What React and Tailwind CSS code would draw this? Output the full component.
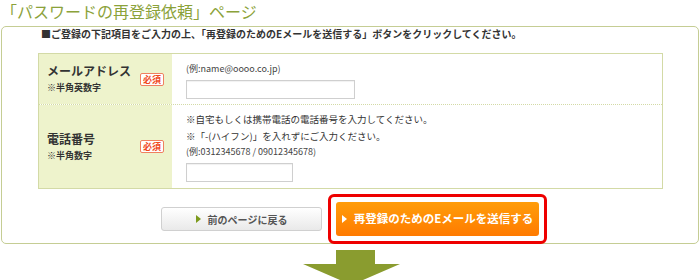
import React from "react";

const jp = { fontFamily: '"Noto Sans CJK JP", "Noto Sans", sans-serif' };

function Badge() {
  return (
    <span className="inline-flex items-center justify-center w-[24px] h-[13px] border border-[#f08060] rounded-[2px] bg-white text-[9px] leading-none font-bold text-[#f04a1e]">
      必須
    </span>
  );
}

function Label({ title, note }) {
  return (
    <div className="w-[133px] shrink-0 bg-[#eef3cc] flex items-center justify-between pl-[8px] pr-[8px]">
      <div>
        <div className="text-[12px] leading-[18px] font-bold text-[#333]">{title}</div>
        <div className="text-[9px] leading-[16px] font-bold text-[#333]">{note}</div>
      </div>
      <Badge />
    </div>
  );
}

export default function App() {
  return (
    <div className="w-[700px] h-[280px] bg-white overflow-hidden" style={jp}>
      {/* Title */}
      <div className="pt-[1px] pl-[1px]">
        <h1 className="text-[16px] leading-[20px] text-[#8ba23a] whitespace-nowrap">
          「パスワードの再登録依頼」ページ
        </h1>
      </div>

      {/* Main box */}
      <div className="mt-[5px] ml-[1px] w-[698px] h-[218px] border border-[#c5cd94] rounded-[5px]">
        <p className="pt-[1px] pl-[39px] text-[10px] leading-[12px] font-bold text-[#333] whitespace-nowrap">
          ■ご登録の下記項目をご入力の上、「再登録のためのEメールを送信する」ボタンをクリックしてください。
        </p>

        {/* Form table */}
        <div className="mt-[13px] ml-[36px] w-[625px] border border-[#d3daa6]">
          <div className="flex h-[51px] border-b border-dotted border-[#d3daa6]">
            <Label title="メールアドレス" note="※半角英数字" />
            <div className="flex-1 pl-[14px] pt-[8px]">
              <div className="text-[9px] leading-[14px] text-[#444]">(例:name@oooo.co.jp)</div>
              <div className="mt-[4px] w-[169px] h-[19px] border border-[#cfcfcf] bg-white shadow-[inset_0_1px_1px_rgba(0,0,0,0.06)]" />
            </div>
          </div>
          <div className="flex h-[83px]">
            <Label title="電話番号" note="※半角数字" />
            <div className="flex-1 pl-[14px] pt-[6px]">
              <div className="text-[9.5px] leading-[16.5px] text-[#333]">
                ※自宅もしくは携帯電話の電話番号を入力してください。
              </div>
              <div className="text-[9.5px] leading-[16.5px] text-[#333]">
                ※「-(ハイフン)」を入れずにご入力ください。
              </div>
              <div className="text-[9px] leading-[16.5px] text-[#444]">
                (例:0312345678 / 09012345678)
              </div>
              <div className="mt-[2px] w-[107px] h-[19px] border border-[#cfcfcf] bg-white shadow-[inset_0_1px_1px_rgba(0,0,0,0.06)]" />
            </div>
          </div>
        </div>

        {/* Buttons */}
        <div className="mt-[5px] ml-[159px] flex items-center gap-[6px]">
          <button className="w-[161px] h-[24px] flex items-center justify-center gap-[7px] border border-[#d0d0d0] rounded-[3px] bg-gradient-to-b from-[#ffffff] to-[#e9e9e9] text-[10px] font-bold text-[#555]">
            <span className="w-0 h-0 border-y-[4px] border-y-transparent border-l-[5px] border-l-[#7c9a1c]" />
            前のページに戻る
          </button>
          <div className="border-[3px] border-[#ee0000] rounded-[6px] p-[5px] bg-white">
            <button className="w-[203px] h-[34px] flex items-center justify-center gap-[7px] rounded-[3px] bg-gradient-to-b from-[#ff9d0a] to-[#ff7a00] text-[11.5px] font-bold text-white">
              <span className="w-0 h-0 border-y-[4px] border-y-transparent border-l-[5px] border-l-white" />
              再登録のためのEメールを送信する
            </button>
          </div>
        </div>
      </div>

      {/* Down arrow */}
      <div className="mt-[6px] ml-[303px]">
        <svg width="97" height="36" viewBox="0 0 97 36">
          <path d="M33 0 H72 V14 H97 L48.5 35 L0 14 H33 Z" fill="#8a9c2f" />
        </svg>
      </div>
    </div>
  );
}
